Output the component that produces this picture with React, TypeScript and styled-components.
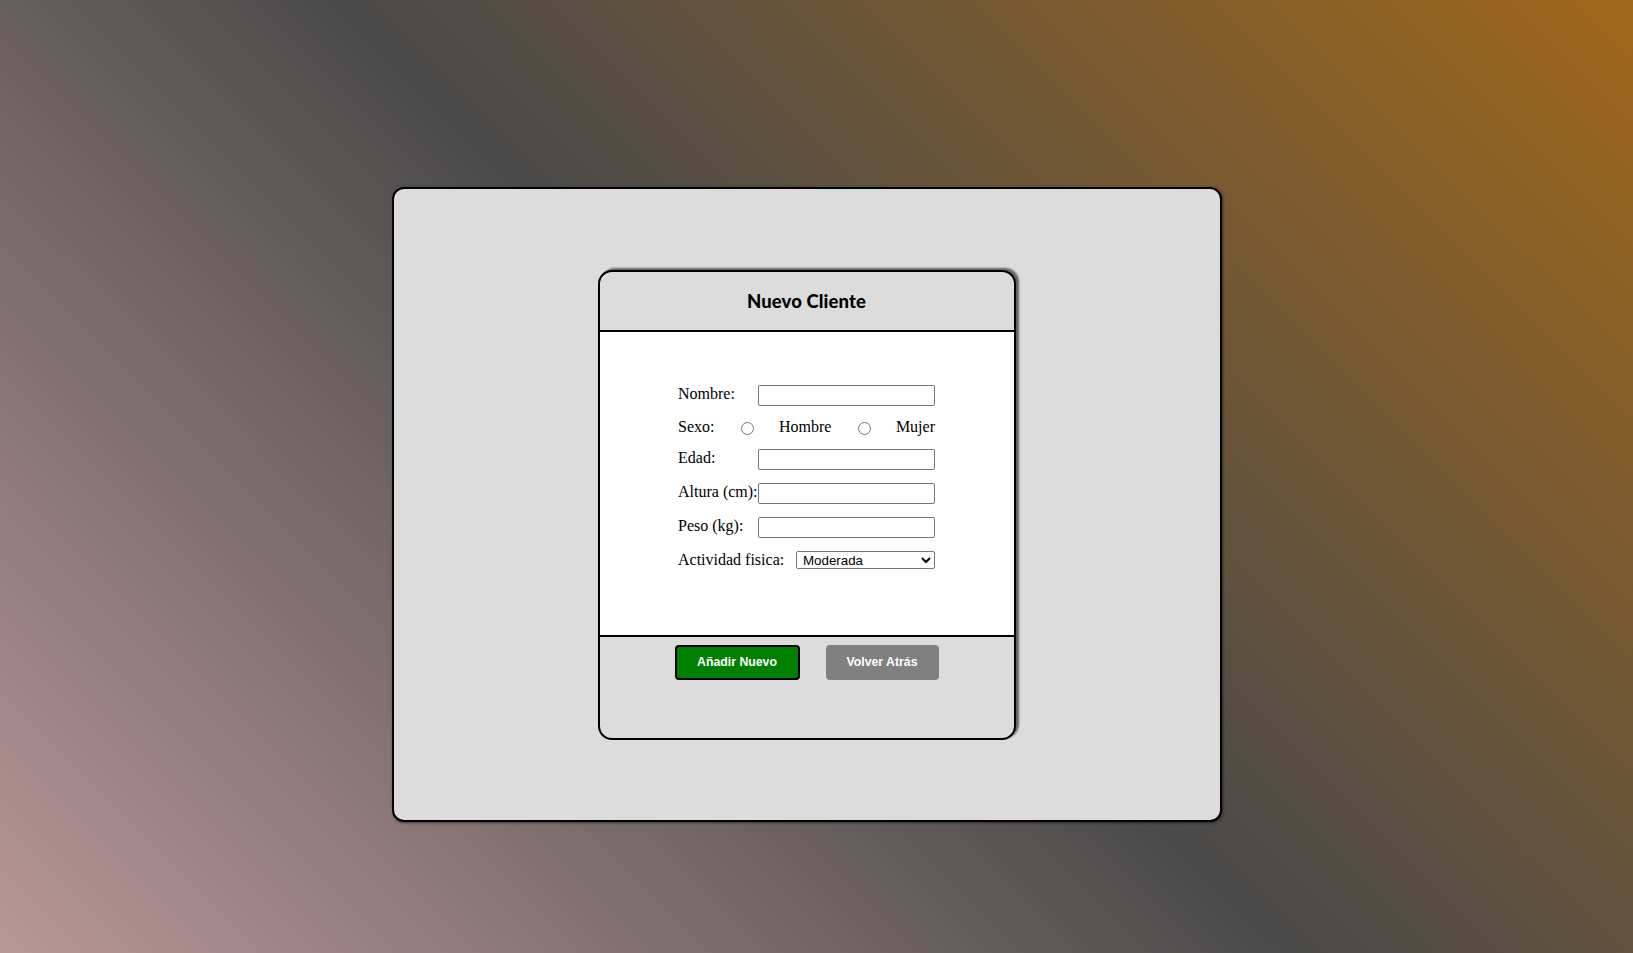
import React from "react";
import styled, { createGlobalStyle } from "styled-components";

const Global = createGlobalStyle`
  html, body { margin: 0; padding: 0; }
  body {
    font-family: "Liberation Serif", "Times New Roman", serif;
    min-height: 100vh;
    background: linear-gradient(45deg, #b99697 0%, #4a4a4a 50%, #a0671a 100%);
    background-attachment: fixed;
  }
`;

const Page = styled.div`
  min-height: 100vh;
  box-sizing: border-box;
  display: flex;
  justify-content: center;
  align-items: flex-start;
  padding: 187px 20px 0 0;
`;

const Panel = styled.div`
  box-sizing: border-box;
  width: 830px;
  height: 635px;
  background: #dcdcdc;
  border: 2px solid #000;
  border-radius: 12px;
  box-shadow: 1px 1px 3px rgba(0, 0, 0, 0.5);
  display: flex;
  align-items: center;
  justify-content: center;
`;

const Card = styled.div`
  box-sizing: border-box;
  width: 418px;
  height: 470px;
  border: 2px solid #000;
  border-radius: 14px;
  background: #dcdcdc;
  box-shadow: 3px -2px 2px rgba(0, 0, 0, 0.55);
  overflow: hidden;
  display: flex;
  flex-direction: column;
`;

const Header = styled.div`
  height: 58px;
  border-bottom: 2px solid #000;
  display: flex;
  align-items: center;
  justify-content: center;
`;

const Title = styled.h2`
  margin: 0;
  font-family: "Lato", "Noto Sans", sans-serif;
  font-weight: 900;
  font-size: 18.5px;
  color: #000;
  letter-spacing: 0.1px;
`;

const Body = styled.div`
  background: #fff;
  border-bottom: 2px solid #000;
  display: flex;
  justify-content: center;
  padding-top: 53px;
  box-sizing: content-box;
  height: 250px;
`;

const Form = styled.form`
  width: 257px;
  display: flex;
  flex-direction: column;
  gap: 13px;
`;

const Row = styled.div<{ $h: number; $top?: boolean }>`
  height: ${(p) => p.$h}px;
  display: flex;
  align-items: ${(p) => (p.$top ? "flex-start" : "center")};
  justify-content: space-between;
  font-size: 16px;
  line-height: 18px;
  color: #000;
`;

const Label = styled.label`
  font-size: 16px;
  line-height: 18px;
  white-space: nowrap;
`;

const TextInput = styled.input`
  box-sizing: border-box;
  width: 177px;
  height: 21px;
  margin: 0;
  padding: 1px 2px;
  border: 1px solid #767676;
  border-radius: 2px;
  background: #fff;
  font-family: "Liberation Sans", Arial, sans-serif;
  font-size: 13.33px;
`;

const Radio = styled.input`
  width: 13px;
  height: 13px;
  margin: 3px 3px 0 5px;
`;

const Select = styled.select`
  box-sizing: border-box;
  width: 139px;
  height: 18px;
  margin: 0;
  padding: 0 0 0 2px;
  border: 1px solid #767676;
  border-radius: 2px;
  background: #fff;
  color: #000;
  font-family: "Liberation Sans", Arial, sans-serif;
  font-size: 13.33px;
`;

const Footer = styled.div`
  flex: 1;
  display: flex;
  justify-content: center;
  align-items: flex-start;
  gap: 26px;
  padding-top: 8px;
`;

const Button = styled.button<{ $variant: "primary" | "secondary" }>`
  box-sizing: border-box;
  width: ${(p) => (p.$variant === "primary" ? 125 : 113)}px;
  height: 35px;
  margin: 0;
  padding: 0;
  border: 2px solid ${(p) => (p.$variant === "primary" ? "#000" : "#808080")};
  border-radius: 4px;
  background: ${(p) => (p.$variant === "primary" ? "#008000" : "#808080")};
  color: #fff;
  font-family: "Liberation Sans", Arial, sans-serif;
  font-weight: 700;
  font-size: 12.3px;
  cursor: pointer;
`;

export default function App() {
  return (
    <>
      <Global />
      <Page>
        <Panel>
          <Card>
            <Header>
              <Title>Nuevo Cliente</Title>
            </Header>
            <Body>
              <Form onSubmit={(e) => e.preventDefault()}>
                <Row $h={21} $top>
                  <Label>Nombre:</Label>
                  <TextInput type="text" />
                </Row>
                <Row $h={17}>
                  <Label>Sexo:</Label>
                  <Radio type="radio" name="sexo" />
                  <span>Hombre</span>
                  <Radio type="radio" name="sexo" />
                  <span>Mujer</span>
                </Row>
                <Row $h={21} $top>
                  <Label>Edad:</Label>
                  <TextInput type="text" />
                </Row>
                <Row $h={21} $top>
                  <Label>Altura (cm):</Label>
                  <TextInput type="text" />
                </Row>
                <Row $h={21} $top>
                  <Label>Peso (kg):</Label>
                  <TextInput type="text" />
                </Row>
                <Row $h={18}>
                  <Label>Actividad fisica:</Label>
                  <Select defaultValue="Moderada">
                    <option>Sedentaria</option>
                    <option>Ligera</option>
                    <option>Moderada</option>
                    <option>Intensa</option>
                  </Select>
                </Row>
              </Form>
            </Body>
            <Footer>
              <Button $variant="primary">Añadir Nuevo</Button>
              <Button $variant="secondary">Volver Atrás</Button>
            </Footer>
          </Card>
        </Panel>
      </Page>
    </>
  );
}
